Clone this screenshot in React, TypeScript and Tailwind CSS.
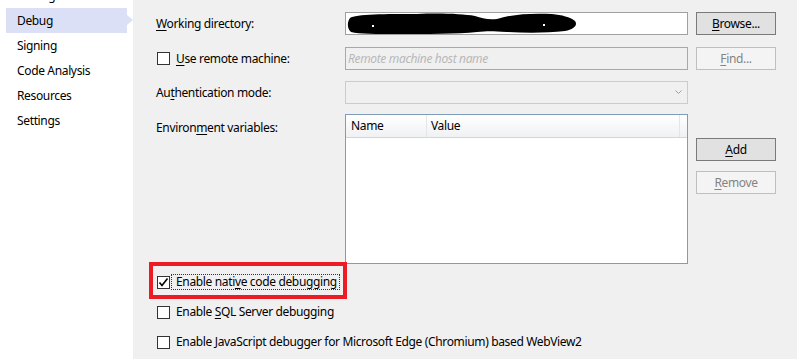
import React from "react";

const font = { fontFamily: '"Noto Sans", "Open Sans", sans-serif', letterSpacing: "-0.35px" };

function U({ children }: { children: React.ReactNode }) {
  return <span className="underline underline-offset-[2px] decoration-1">{children}</span>;
}

function Checkbox({ checked = false }: { checked?: boolean }) {
  return (
    <div className="w-[13px] h-[13px] border border-[#333333] bg-white flex items-center justify-center shrink-0">
      {checked && (
        <svg width="11" height="11" viewBox="0 0 11 11">
          <path d="M1.5 5.5 L4 8.5 L9.5 1.5" fill="none" stroke="#000" strokeWidth="1.6" />
        </svg>
      )}
    </div>
  );
}

function Btn({ children, disabled = false }: { children: React.ReactNode; disabled?: boolean }) {
  return (
    <div
      className={
        "w-[80px] h-[23px] flex items-center justify-center text-[12px] border " +
        (disabled
          ? "bg-[#f4f4f4] border-[#bfbfbf] text-[#838383]"
          : "bg-[#e1e1e1] border-[#7a7a7a] text-black")
      }
    >
      {children}
    </div>
  );
}

export default function App() {
  const items = ["Package", "Debug", "Signing", "Code Analysis", "Resources", "Settings"];
  return (
    <div className="w-[797px] h-[359px] flex overflow-hidden text-[12px] text-black" style={font}>
      <div className="w-[133px] bg-white shrink-0 flex flex-col mt-[-17px]">
        {items.map((it) => (
          <div key={it} className="relative h-[25px] flex items-center">
            {it === "Debug" ? (
              <>
                <div className="ml-[6px] w-[121px] h-[25px] bg-[#dce0f7] flex items-center pl-[11px]">{it}</div>
                <div className="absolute left-[127px] top-[7px] w-0 h-0 border-y-[5.5px] border-y-transparent border-l-[6px] border-l-[#dce0f7]" />
              </>
            ) : (
              <div className="pl-[17px]">{it}</div>
            )}
          </div>
        ))}
      </div>
      <div className="flex-1 bg-[#f0f0f0] pl-[23px] flex flex-col">
        {/* Working directory */}
        <div className="flex items-center mt-[12px] h-[23px]">
          <div className="w-[189px]">
            <U>W</U>orking directory:
          </div>
          <div className="relative w-[343px] h-[23px] bg-white border border-[#a0a0a0]">
            <svg className="absolute left-[1px] top-[0px]" width="232" height="21" viewBox="0 0 232 21">
              <path
                d="M3 5 C8 1 40 1 70 1 C95 0 115 1 128 3 C135 5 140 7 150 6 C165 1 185 0 205 1 C215 2 223 4 228 8 C231 12 227 16 218 18 C200 20 180 20 160 19 C145 18 140 18 130 19 C110 21 80 21 50 21 C30 21 12 21 4 19 C0 16 0 9 3 5 Z"
                fill="#000"
              />
              <rect x="25" y="12" width="2" height="2" fill="#fff" />
              <rect x="196" y="11" width="2" height="2" fill="#fff" />
            </svg>
          </div>
          <div className="ml-[8px]">
            <Btn>
              <U>B</U>rowse...
            </Btn>
          </div>
        </div>
        {/* Remote machine */}
        <div className="flex items-center mt-[12px] h-[23px]">
          <div className="w-[189px] flex items-center pl-[1px]">
            <Checkbox />
            <span className="ml-[6px]">
              <U>U</U>se remote machine:
            </span>
          </div>
          <div className="w-[343px] h-[23px] bg-[#f0f0f0] border border-[#a8a8a8] flex items-center pl-[2px] italic text-[#b8b8b8]">
            Remote machine host name
          </div>
          <div className="ml-[8px]">
            <Btn disabled>
              <U>F</U>ind...
            </Btn>
          </div>
        </div>
        {/* Authentication */}
        <div className="flex items-center mt-[11px] h-[23px]">
          <div className="w-[189px]">
            Au<U>t</U>hentication mode:
          </div>
          <div className="w-[343px] h-[23px] bg-[#f0f0f0] border border-[#cccccc] flex items-center justify-end pr-[5px]">
            <svg width="7" height="5" viewBox="0 0 7 5">
              <path d="M0.5 0.5 L3.5 3.5 L6.5 0.5" fill="none" stroke="#a0a0a0" strokeWidth="1" />
            </svg>
          </div>
        </div>
        {/* Env vars */}
        <div className="flex mt-[10px] h-[150px]">
          <div className="w-[189px] pt-[5px]">
            Environ<U>m</U>ent variables:
          </div>
          <div className="w-[343px] h-[150px] bg-white border border-[#7f9db9] flex flex-col">
            <div className="h-[23px] flex bg-gradient-to-b from-white to-[#f0f1f3] border-b border-[#d5d5d5]">
              <div className="w-[81px] border-r border-[#e5e5e5] pl-[5px] flex items-center">Name</div>
              <div className="w-[253px] border-r border-[#e5e5e5] pl-[4px] flex items-center">Value</div>
            </div>
          </div>
          <div className="ml-[8px] flex flex-col pt-[24px]">
            <Btn>
              <U>A</U>dd
            </Btn>
            <div className="mt-[10px]">
              <Btn disabled>
                <U>R</U>emove
              </Btn>
            </div>
          </div>
        </div>
        {/* Checkboxes */}
        <div className="relative flex items-center mt-[10px] h-[16px] pl-[1px]">
          <div className="absolute left-[-7px] top-[-12px] w-[198px] h-[37px] border-[4px] border-[#ed1c24]" />
          <Checkbox checked />
          <div className="ml-[1px] h-[16px] border border-dotted border-[#333] pl-[4px] pr-[2px] flex items-center">
            Enable nati<U>v</U>e code debugging
          </div>
        </div>
        <div className="flex items-center mt-[14px] h-[16px] pl-[1px]">
          <Checkbox />
          <span className="ml-[6px]">
            Enable <U>S</U>QL Server debugging
          </span>
        </div>
        <div className="flex items-center mt-[14px] h-[16px] pl-[1px]">
          <Checkbox />
          <span className="ml-[6px]">Enable JavaScript debugger for Microsoft Edge (Chromium) based WebView2</span>
        </div>
      </div>
    </div>
  );
}
